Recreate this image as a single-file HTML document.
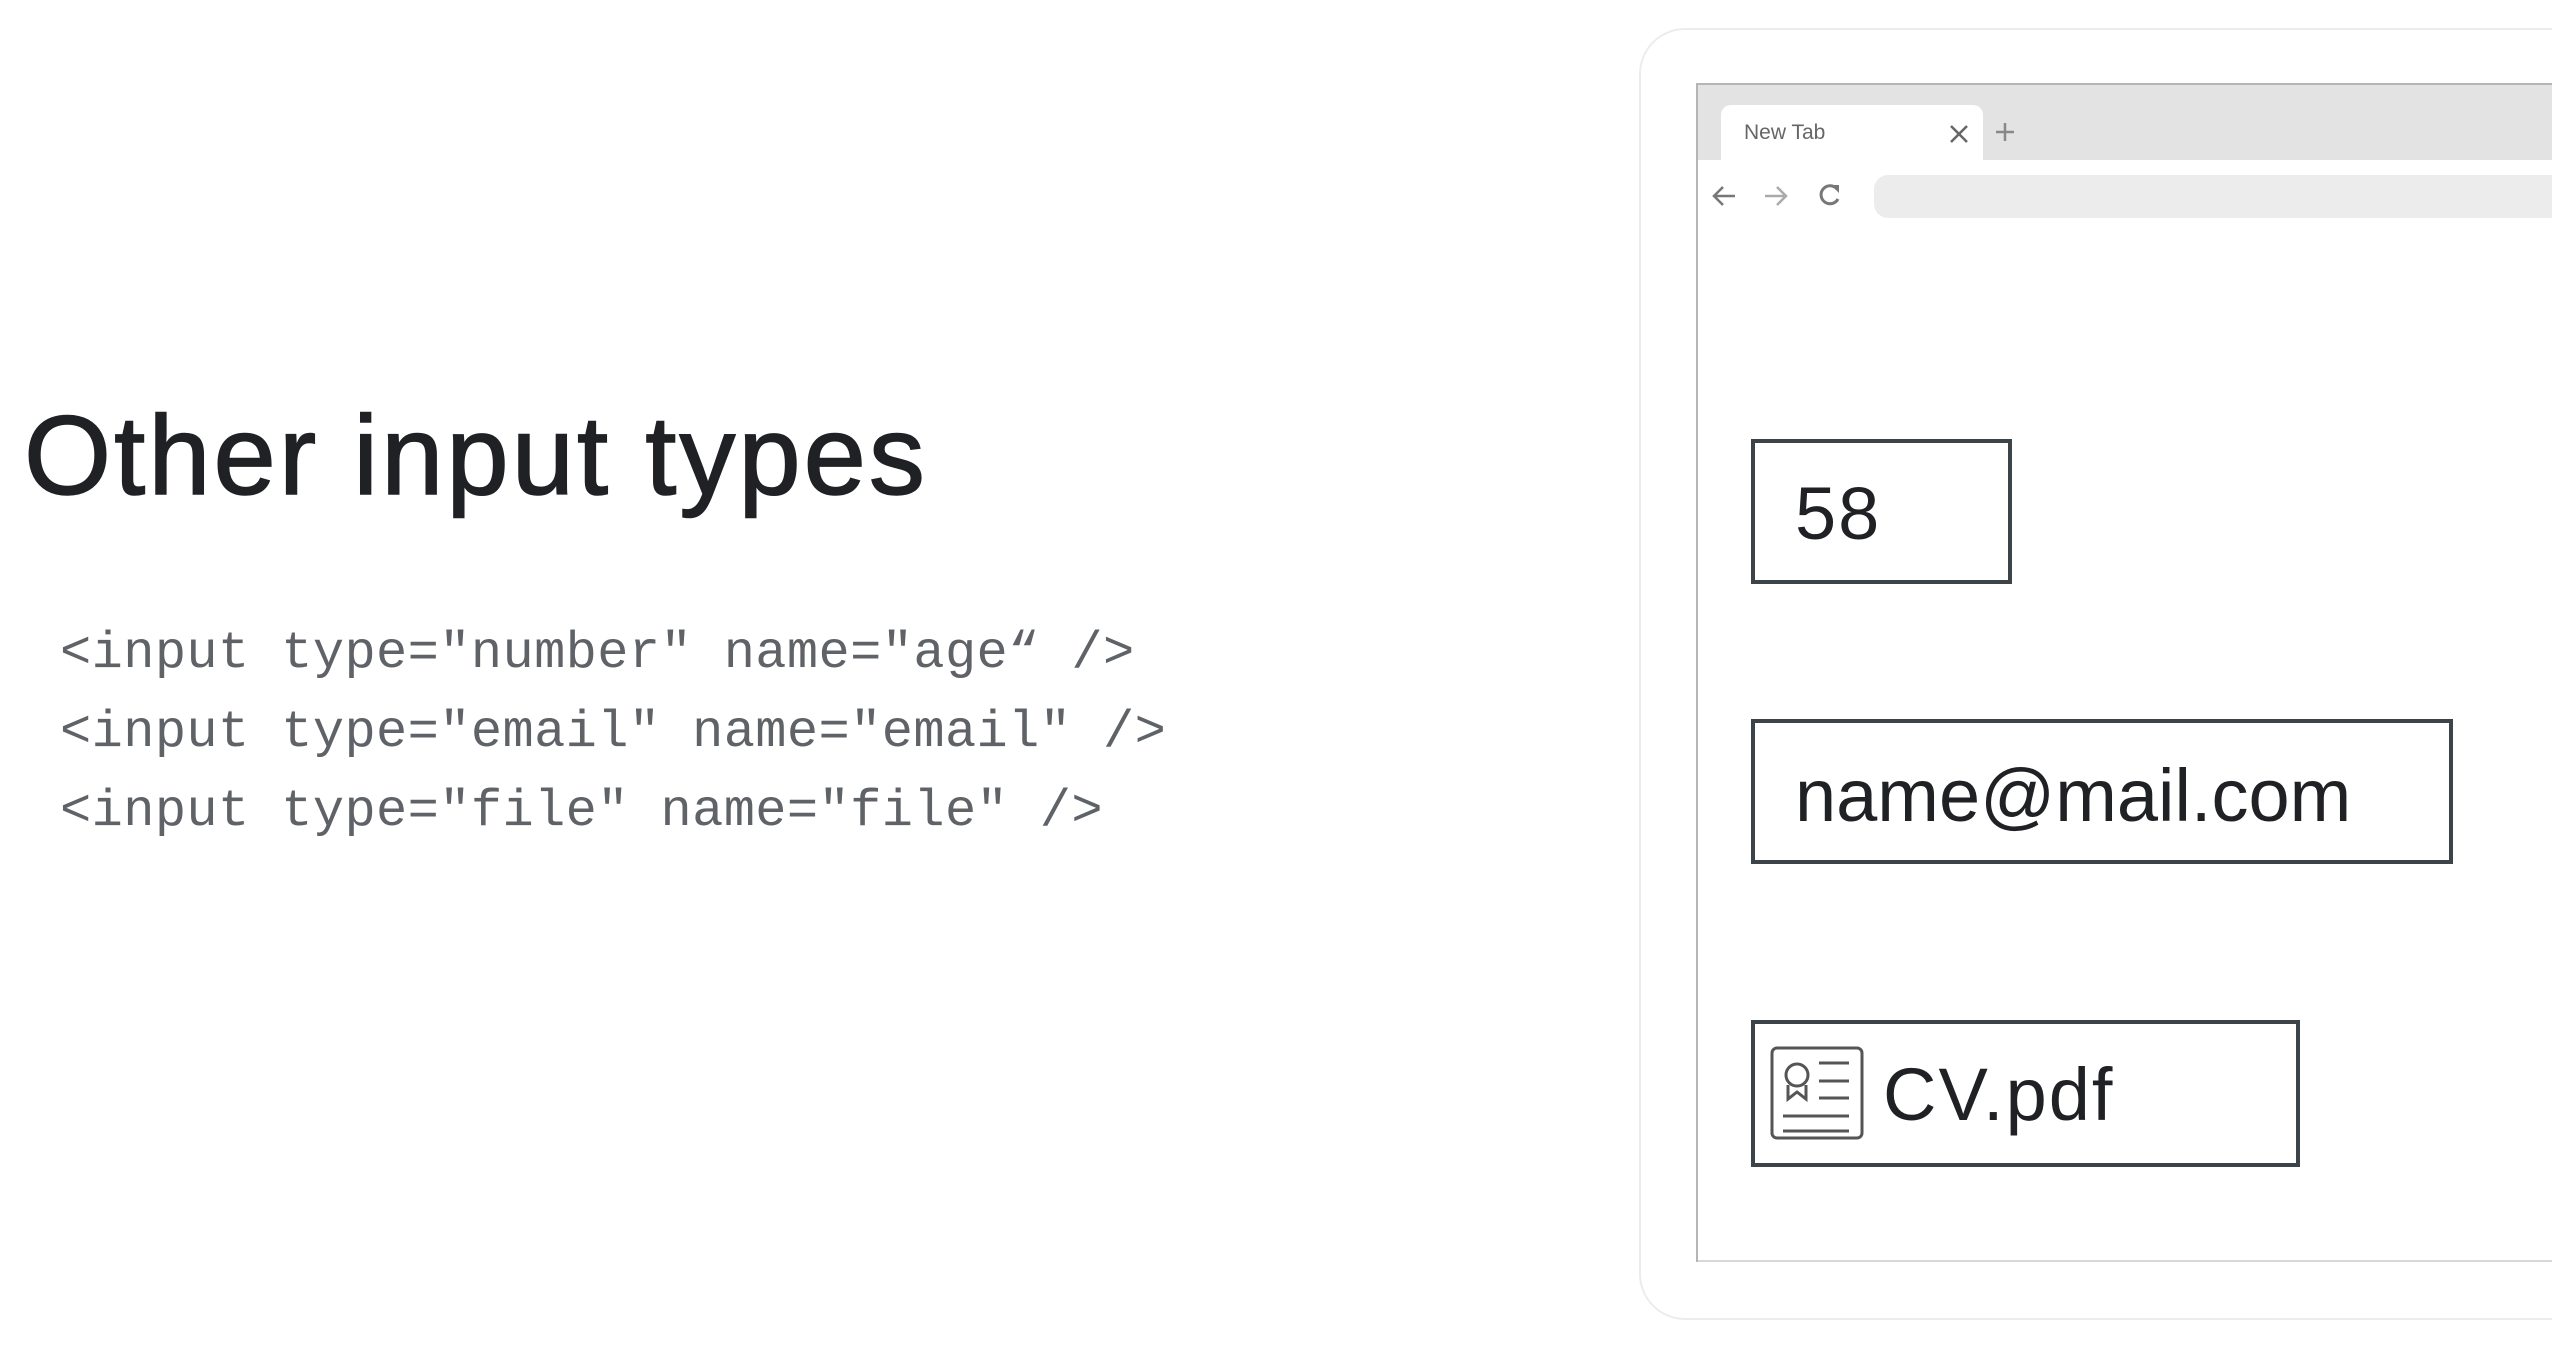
<!DOCTYPE html>
<html><head><meta charset="utf-8"><style>
html,body{margin:0;padding:0;width:2552px;height:1346px;background:#fff;overflow:hidden;position:relative;font-family:"Liberation Sans",sans-serif}
.abs{position:absolute}
h1{position:absolute;left:24px;top:386px;margin:0;font-size:112px;font-weight:normal;color:#202124;letter-spacing:3px;line-height:140px;-webkit-text-stroke:1.5px #202124}
.code{position:absolute;left:60px;top:614px;font-family:"Liberation Mono",monospace;font-size:52px;line-height:79px;color:#5f6368;white-space:pre;letter-spacing:0.4px}
.frame{left:1639px;top:28px;width:1000px;height:1288px;border:2px solid #ececec;border-radius:46px}
.win{left:1696px;top:83px;width:900px;height:1175px;border:2px solid #b5b5b5;border-right:none;background:#fff}
.tabbar{left:0;top:0;right:0;height:75px;background:#e3e3e3}
.tab{left:23px;top:20px;width:262px;height:60px;background:#fff;border-radius:10px 10px 0 0}
.url{left:176px;top:90px;width:800px;height:43px;background:#ececec;border-radius:14px}
.box{position:absolute;border:4px solid #3c4449;box-sizing:border-box;background:#fff;color:#202124;font-size:74px}
</style></head><body>
<h1>Other input types</h1>
<div class="code">&lt;input type="number" name="age“ /&gt;
&lt;input type="email" name="email" /&gt;
&lt;input type="file" name="file" /&gt;</div>

<div class="abs frame"></div>
<div class="abs win">
  <div class="abs tabbar"></div>
  <div class="abs tab"><span class="abs" style="left:23px;top:16px;font-size:21px;color:#666">New Tab</span>
    <svg class="abs" style="left:227px;top:18px" width="22" height="22" viewBox="0 0 22 22"><path d="M3 3L19 19M19 3L3 19" stroke="#666" stroke-width="2.5"/></svg>
  </div>
  <svg class="abs" style="left:296px;top:36px" width="22" height="22" viewBox="0 0 22 22"><path d="M11 2V20M2 11H20" stroke="#888" stroke-width="2.5"/></svg>
  <svg class="abs" style="left:12px;top:98px" width="28" height="26" viewBox="0 0 28 26"><path d="M25 13H4M13 4L4 13L13 22" stroke="#777" stroke-width="2.5" fill="none"/></svg>
  <svg class="abs" style="left:64px;top:98px" width="28" height="26" viewBox="0 0 28 26"><path d="M3 13H24M15 4L24 13L15 22" stroke="#aaa" stroke-width="2.5" fill="none"/></svg>
  <svg class="abs" style="left:118px;top:96px" width="28" height="28" viewBox="0 0 28 28"><path d="M21 8A9 9 0 1 0 22 18" stroke="#777" stroke-width="3" fill="none"/><path d="M15 4H23V12Z" fill="#777"/></svg>
  <div class="abs url"></div>
  <div class="abs" style="left:0;right:0;bottom:-2px;height:2px;background:#d8d8d8"></div>
</div>

<div class="box" style="left:1751px;top:439px;width:261px;height:145px"><span class="abs" style="left:40px;top:28px;letter-spacing:2px">58</span></div>
<div class="box" style="left:1751px;top:719px;width:702px;height:145px"><span class="abs" style="left:40px;top:30px">name@mail.com</span></div>
<div class="box" style="left:1751px;top:1020px;width:549px;height:147px">
  <svg class="abs" style="left:14px;top:21px" width="96" height="96" viewBox="0 0 96 96"><rect x="3" y="3" width="90" height="90" rx="5" fill="none" stroke="#555" stroke-width="3"/><circle cx="28" cy="30" r="11" fill="none" stroke="#555" stroke-width="3"/><path d="M19 40V54L28 47L37 54V40" fill="none" stroke="#555" stroke-width="3"/><path d="M50 18H80M50 36H80M50 53H80M14 71H80M14 86H80" stroke="#555" stroke-width="3"/></svg>
  <span class="abs" style="left:128px;top:28px;letter-spacing:2px">CV.pdf</span>
</div>
</body></html>
